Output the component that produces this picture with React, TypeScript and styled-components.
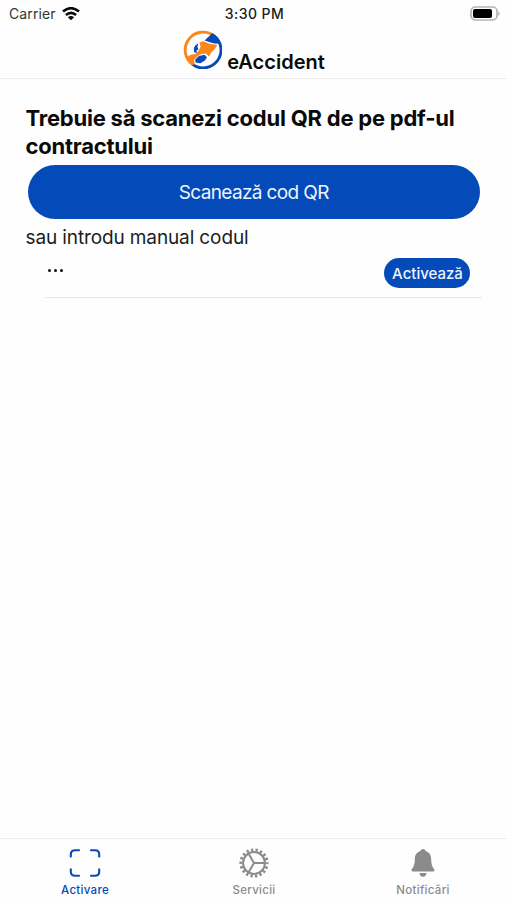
import React from "react";
import styled, { createGlobalStyle } from "styled-components";

const BLUE = "#044bb9";
const ORANGE = "#fb861a";
const GREY = "#8b8b8b";

const GlobalStyle = createGlobalStyle`
  * { box-sizing: border-box; }
  body { margin: 0; background: #fefefe; }
`;

const Screen = styled.div`
  width: 507px;
  height: 900px;
  display: flex;
  flex-direction: column;
  background: #fefefe;
  color: #0a0a0a;
  font-family: Inter, "Liberation Sans", sans-serif;
`;

const StatusBar = styled.div`
  height: 27px;
  flex: none;
  display: grid;
  grid-template-columns: 1fr auto 1fr;
  align-items: center;
  padding: 0 7px 0 9px;
`;

const Carrier = styled.div`
  display: flex;
  align-items: center;
  gap: 6px;
  font-size: 14px;
  line-height: 17px;
  letter-spacing: 0.1px;
  color: #333;
`;

const Clock = styled.div`
  font-size: 14px;
  line-height: 17px;
  font-weight: 500;
  letter-spacing: 0.45px;
  color: #1c1c1c;
`;

const BatteryIcon = styled.svg`
  justify-self: end;
  margin-right: -1px;
`;

const Header = styled.header`
  height: 52px;
  flex: none;
  display: flex;
  justify-content: center;
  align-items: flex-start;
  gap: 5px;
  padding-top: 3px;
  padding-left: 1px;
  border-bottom: 1px solid #ececec;
`;

const AppName = styled.h1`
  margin: 20px 0 0;
  font-size: 20px;
  line-height: 24px;
  font-weight: 600;
`;

const Content = styled.main`
  flex: 1;
  display: flex;
  flex-direction: column;
  padding: 25px 26px 0 25.5px;
`;

const Title = styled.h2`
  margin: 0 0 4.5px;
  font-size: 22px;
  line-height: 28px;
  font-weight: 700;
  letter-spacing: -0.22px;
`;

const ScanButton = styled.button`
  height: 54.5px;
  margin: 0 1px 0 2px;
  padding: 2px 0 0;
  border: 0;
  border-radius: 28px;
  background: ${BLUE};
  color: #eef5ff;
  font: 400 19px/24px Inter, "Liberation Sans", sans-serif;
  letter-spacing: -0.63px;
`;

const Hint = styled.p`
  margin: 7px 0 0;
  font-size: 19px;
  line-height: 24px;
  letter-spacing: -0.12px;
  color: #1c1c1c;
`;

const CodeRow = styled.div`
  height: 48px;
  margin-left: 19px;
  margin-right: -1px;
  padding: 8px 12px 0 0;
  display: flex;
  justify-content: space-between;
  align-items: flex-start;
  border-bottom: 1px solid #e8e8e8;
`;

const Dots = styled.span`
  display: flex;
  gap: 3px;
  margin: 11px 0 0 3px;
  i {
    width: 3px;
    height: 3px;
    border-radius: 50%;
    background: #111;
  }
`;

const ActivateButton = styled.button`
  width: 86px;
  height: 29.5px;
  padding: 1.5px 0 0 1px;
  border: 0;
  border-radius: 15px;
  background: ${BLUE};
  color: #eef5ff;
  font: 500 15px/20px Inter, "Liberation Sans", sans-serif;
`;

const TabBar = styled.nav`
  height: 62px;
  flex: none;
  display: grid;
  grid-template-columns: repeat(3, 1fr);
  border-top: 1px solid #ececec;
`;

const Tab = styled.div<{ $active?: boolean }>`
  display: flex;
  flex-direction: column;
  align-items: center;
  padding: 8px 0 0 1px;
  color: ${(p) => (p.$active ? BLUE : GREY)};
  font-size: 11.5px;
  line-height: 15px;
  font-weight: 450;
  letter-spacing: 0.3px;
  svg { margin-bottom: 4px; }
`;

const Wifi = () => (
  <svg width="18" height="14" viewBox="0 0 18 14" fill="none" stroke="#0a0a0a" strokeWidth="2.6">
    <path d="M1 4.6Q9 -2.2 17 4.6" />
    <path d="M3.9 8Q9 3.7 14.1 8" />
    <path d="M9 13.2 5.9 10.3Q9 7.7 12.1 10.3Z" fill="#0a0a0a" stroke="none" />
  </svg>
);

const Battery = () => (
  <BatteryIcon width="31" height="15" viewBox="0 0 31 15">
    <rect x="1" y="1" width="26" height="13" rx="4.2" fill="#fff" stroke="#b5b5b5" strokeWidth="1.7" />
    <rect x="3" y="3" width="19" height="9" rx="2" fill="#000" />
    <path d="M28.3 5.2Q31 7.5 28.3 9.8Z" fill="#aaa" />
  </BatteryIcon>
);

const Logo = () => (
  <svg width="39" height="39" viewBox="0 0 39 39">
    <path d="M9.2 34.2A17.9 17.9 0 0 1 31 5.8" fill="none" stroke={ORANGE} strokeWidth="2.9" />
    <path d="M31 5.8A17.9 17.9 0 0 1 9.2 34.2" fill="none" stroke={BLUE} strokeWidth="2.9" />
    <path d="M21.6 10.4 29.4 3Q36 6.8 37.6 13.8L31.5 13.6 27 12.2Z" fill={BLUE} />
    <path d="M16.6 12.6 20.4 11.3 25.6 13.6 34.4 15 31.2 19.8 28.2 22.4 26 26.4 22.6 23.6 17.6 24.2 13.2 27.4 11 30 11.6 34.6 9 35Q4.6 32 3 27.6L8.6 24.4 12.6 24 15.8 20.6 17.6 16.8Z" fill={ORANGE} />
    <path d="M15.4 13.2 12.2 15.4 10.8 18.2 11.2 22.2 13.6 23.2 13.6 20.4 15.4 19.4 14.4 16.8Z" fill={BLUE} />
    <path d="M12.2 29.6 16 26 21.6 24.8 24 27.4 21.8 30.4 17.4 33.3 12.6 32.6Z" fill={BLUE} />
  </svg>
);

const ScanIcon = () => (
  <svg width="32" height="32" viewBox="0 0 32 32" fill="none" stroke="currentColor" strokeWidth="2.1" strokeLinecap="round">
    <path d="M1.8 9.6V7.5Q1.8 3.2 6.1 3.2H10M22 3.2H25.9Q30.2 3.2 30.2 7.5V9.6M30.2 22.4V24.5Q30.2 28.8 25.9 28.8H22M10 28.8H6.1Q1.8 28.8 1.8 24.5V22.4" />
  </svg>
);

const GearIcon = () => (
  <svg width="32" height="32" viewBox="0 0 32 32" fill="none" stroke="currentColor">
    <circle cx="16" cy="16" r="10.9" strokeWidth="2" />
    <circle cx="16" cy="16" r="13.1" strokeWidth="3" strokeDasharray="2.3 2.273" strokeDashoffset="1.15" />
    <path d="M16 16H27.3M16 16 10.35 6.2M16 16 10.35 25.8" strokeWidth="2" />
  </svg>
);

const BellIcon = () => (
  <svg width="32" height="32" viewBox="0 0 32 32" fill="currentColor">
    <path d="M16 2C14.5 2 13.6 3 13.4 4.1C9.7 5.1 7.9 8.2 7.8 12.2C7.7 18 6.6 20 4.9 22C4.1 23 4.5 24.4 5.8 24.4H26.2C27.5 24.4 27.9 23 27.1 22C25.4 20 24.3 18 24.2 12.2C24.1 8.2 22.3 5.1 18.6 4.1C18.4 3 17.5 2 16 2Z" />
    <path d="M12.5 26H19.5Q19.2 29.7 16 29.7T12.5 26Z" />
  </svg>
);

export default function App() {
  return (
    <>
      <GlobalStyle />
      <Screen>
        <StatusBar>
          <Carrier>Carrier<Wifi /></Carrier>
          <Clock>3:30 PM</Clock>
          <Battery />
        </StatusBar>
        <Header>
          <Logo />
          <AppName>eAccident</AppName>
        </Header>
        <Content>
          <Title>Trebuie să scanezi codul QR de pe pdf-ul contractului</Title>
          <ScanButton>Scanează cod QR</ScanButton>
          <Hint>sau introdu manual codul</Hint>
          <CodeRow>
            <Dots><i /><i /><i /></Dots>
            <ActivateButton>Activează</ActivateButton>
          </CodeRow>
        </Content>
        <TabBar>
          <Tab $active><ScanIcon />Activare</Tab>
          <Tab><GearIcon />Servicii</Tab>
          <Tab><BellIcon />Notificări</Tab>
        </TabBar>
      </Screen>
    </>
  );
}
